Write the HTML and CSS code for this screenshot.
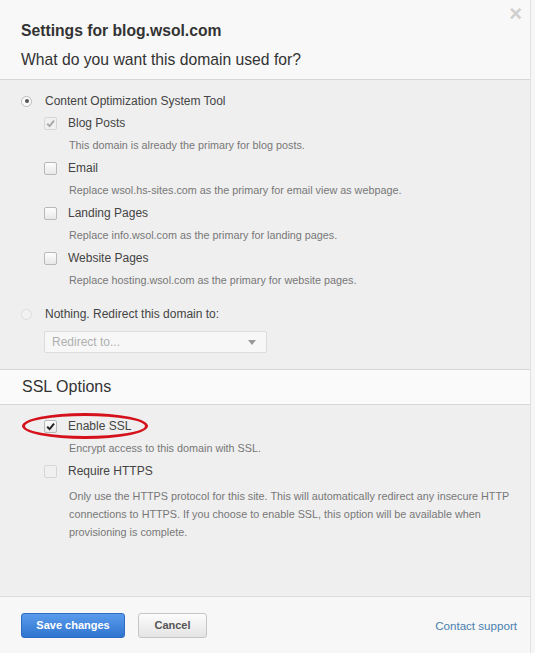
FILE: index.html
```html
<!DOCTYPE html>
<html lang="en">
<head>
    <meta charset="UTF-8">
    <meta name="viewport" content="width=device-width, initial-scale=1.0">
    <title>Settings for blog.wsol.com</title>
    <link rel="stylesheet" href="styles.css">
</head>
<body>
    <div class="modal">
        <div class="modal-head">
            <span class="close">&times;</span>
            <h1>Settings for blog.wsol.com</h1>
            <h2>What do you want this domain used for?</h2>
        </div>

        <div class="section-body usage">
            <div class="row top">
                <span class="radio checked"></span>
                <span class="label">Content Optimization System Tool</span>
            </div>
            <div class="option">
                <div class="row">
                    <span class="box checked disabled"><svg viewBox="0 0 10 10"><path d="M2 5.2 L4.2 7.4 L8.2 2.4" /></svg></span>
                    <span class="label">Blog Posts</span>
                </div>
                <p class="desc">This domain is already the primary for blog posts.</p>
            </div>
            <div class="option">
                <div class="row">
                    <span class="box"></span>
                    <span class="label">Email</span>
                </div>
                <p class="desc">Replace wsol.hs-sites.com as the primary for email view as webpage.</p>
            </div>
            <div class="option">
                <div class="row">
                    <span class="box"></span>
                    <span class="label">Landing Pages</span>
                </div>
                <p class="desc">Replace info.wsol.com as the primary for landing pages.</p>
            </div>
            <div class="option">
                <div class="row">
                    <span class="box"></span>
                    <span class="label">Website Pages</span>
                </div>
                <p class="desc">Replace hosting.wsol.com as the primary for website pages.</p>
            </div>

            <div class="row top nothing">
                <span class="radio disabled"></span>
                <span class="label">Nothing. Redirect this domain to:</span>
            </div>
            <div class="select">
                <span>Redirect to...</span>
                <span class="caret"></span>
            </div>
        </div>

        <div class="section-head">
            <h2>SSL Options</h2>
        </div>

        <div class="section-body ssl">
            <div class="option">
                <div class="row marked">
                    <span class="box checked"><svg viewBox="0 0 10 10"><path d="M2 5.2 L4.2 7.4 L8.2 2.4" /></svg></span>
                    <span class="label">Enable SSL</span>
                    <span class="circle"></span>
                </div>
                <p class="desc">Encrypt access to this domain with SSL.</p>
            </div>
            <div class="option">
                <div class="row">
                    <span class="box disabled"></span>
                    <span class="label">Require HTTPS</span>
                </div>
                <p class="desc long">Only use the HTTPS protocol for this site. This will automatically redirect any insecure HTTP connections to HTTPS. If you choose to enable SSL, this option will be available when provisioning is complete.</p>
            </div>
        </div>

        <div class="modal-foot">
            <button class="btn primary">Save changes</button>
            <button class="btn">Cancel</button>
            <a href="#" class="support">Contact support</a>
        </div>
    </div>
</body>
</html>
```

FILE: styles.css
```css
body {
    margin: 0;
    padding: 0;
    font-family: "Liberation Sans", Arial, sans-serif;
    background: #f6f6f6;
    color: #333;
}

.modal {
    width: 530px;
    height: 653px;
    border-right: 1px solid #e2e2e2;
    display: flex;
    flex-direction: column;
    background: #efefef;
}

.modal-head {
    position: relative;
    background: #f8f8f8;
    padding: 21px 21px 0;
    height: 58px;
    border-bottom: 1px solid #d6d6d6;
}

.close {
    position: absolute;
    top: 1px;
    right: 8px;
    font-size: 22px;
    color: #cfcfcf;
    font-weight: bold;
}

h1 {
    margin: 0;
    font-size: 15.7px;
    font-weight: bold;
    color: #333;
    line-height: 20px;
}

h2 {
    margin: 0;
    font-size: 16px;
    font-weight: normal;
    color: #333;
    line-height: 22px;
}

.modal-head h2 {
    margin-top: 8px;
    font-size: 15.7px;
}

.section-body {
    padding: 0 0 0 21px;
}

.usage {
    padding-top: 10px;
    height: 279px;
    border-bottom: 1px solid #d6d6d6;
}

.row {
    display: flex;
    align-items: center;
    height: 22px;
    font-size: 12px;
    color: #444;
    position: relative;
}

.option {
    padding-left: 23px;
}

.option .row .box {
    margin-right: 11px;
}

.label {
    line-height: 22px;
}

.desc {
    margin: 0;
    padding-left: 25px;
    font-size: 10.8px;
    color: #777;
    line-height: 23px;
}

.desc.long {
    line-height: 18px;
    padding-top: 5px;
    padding-right: 20px;
}

.radio {
    width: 9px;
    height: 9px;
    border: 1px solid #bbb;
    border-radius: 50%;
    background: #fafafa;
    margin: 0 13px 0 0;
    position: relative;
    box-sizing: content-box;
}

.radio.checked::after {
    content: "";
    position: absolute;
    left: 2.5px;
    top: 2.5px;
    width: 4px;
    height: 4px;
    border-radius: 50%;
    background: #555;
}

.radio.disabled {
    border-color: #ddd;
    background: #f2f2f2;
}

.box {
    width: 11px;
    height: 11px;
    border: 1px solid #b9b9b9;
    border-radius: 2px;
    background: linear-gradient(#fdfdfd, #e8e8e8);
    display: inline-flex;
}

.box svg {
    width: 11px;
    height: 11px;
}

.box svg path {
    fill: none;
    stroke: #222;
    stroke-width: 1.8;
}

.box.disabled {
    border-color: #d6d6d6;
    background: #f0f0f0;
}

.box.disabled svg path {
    stroke: #a8a8a8;
}

.nothing {
    margin-top: 11px;
}

.select {
    margin: 6px 0 0 23px;
    height: 20px;
    border: 1px solid #dcdcdc;
    border-radius: 2px;
    background: #f7f7f7;
    display: flex;
    align-items: center;
    justify-content: space-between;
    padding: 0 10px 0 7px;
    box-sizing: content-box;
    font-size: 12px;
    color: #b0b0b0;
    width: 204px;
}

.caret {
    width: 0;
    height: 0;
    border-left: 4px solid transparent;
    border-right: 4px solid transparent;
    border-top: 5px solid #999;
}

.section-head {
    background: #fafafa;
    height: 34px;
    padding-left: 22px;
    display: flex;
    align-items: center;
    border-bottom: 1px solid #d6d6d6;
}

.section-head h2 {
    font-size: 16px;
}

.ssl {
    padding-top: 10px;
    flex: 1;
    border-bottom: 1px solid #dcdcdc;
}

.marked .circle {
    position: absolute;
    left: -22px;
    top: -2px;
    width: 120px;
    height: 20px;
    border: 3px solid #d5121c;
    border-radius: 50%;
}

.modal-foot {
    height: 56px;
    background: #f7f7f7;
    display: flex;
    align-items: center;
    padding: 0 13px 0 21px;
}

.btn {
    height: 25px;
    padding: 0;
    border: 1px solid #c6c6c6;
    border-radius: 3px;
    background: linear-gradient(#fcfcfc, #e4e4e4);
    color: #555;
    font-family: "Liberation Sans", Arial, sans-serif;
    font-size: 11px;
    font-weight: bold;
    margin-right: 13px;
    width: 69px;
    white-space: nowrap;
}

.btn.primary {
    width: 104px;
    border-color: #2d6cc0;
    background: linear-gradient(#5a9ceb, #2f74d0);
    color: #fff;
}

.support {
    margin-left: auto;
    font-size: 11.6px;
    color: #4a7fb0;
    text-decoration: none;
}
```
